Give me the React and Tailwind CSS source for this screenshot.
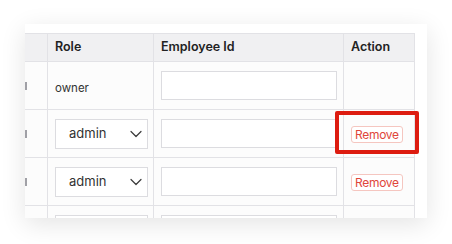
import React from 'react';

const ROWS = [
  { role: 'owner', editable: false, remove: false },
  { role: 'admin', editable: true, remove: true, highlight: true },
  { role: 'admin', editable: true, remove: true },
  { role: '', editable: true, remove: false },
];

const Chevron = () => (
  <svg width="12" height="8" viewBox="0 0 12 8" fill="none" className="absolute right-[5px] top-1/2 -translate-y-1/2">
    <path d="M1 1.5 L6 6.5 L11 1.5" stroke="#3a3a3a" strokeWidth="1.2" strokeLinecap="round" strokeLinejoin="round" />
  </svg>
);

const RoleSelect = ({ value }) => (
  <div className="relative w-[93px] h-[30px] border border-[#dcdce0] bg-white flex items-center pl-[13px] text-[13px] text-[#333]">
    {value}
    <Chevron />
  </div>
);

const EmployeeInput = () => (
  <div className="w-[176px] h-[29px] border border-[#dcdce0] bg-white" />
);

export default function App() {
  return (
    <div className="w-[452px] h-[244px] bg-white pt-[24px] pl-[25px]" style={{ fontFamily: 'Inter, "Liberation Sans", sans-serif' }}>
      <div className="w-[402px] h-[194px] bg-white shadow-[0_6px_24px_rgba(0,0,0,0.11)] overflow-hidden pt-[9px]">
        <table className="border-collapse table-fixed ml-[-31px] w-[420px]">
          <colgroup>
            <col className="w-[53px]" />
            <col className="w-[106px]" />
            <col className="w-[190px]" />
            <col className="w-[71px]" />
          </colgroup>
          <thead>
            <tr className="h-[28px] bg-[#f0f0f2]">
              <th className="border border-[#e2e2e6]" />
              <th className="border border-[#e2e2e6] text-left pl-[7px] text-[12.5px] font-semibold text-[#222]">Role</th>
              <th className="border border-[#e2e2e6] text-left pl-[7px] text-[12.5px] font-semibold text-[#222]">Employee Id</th>
              <th className="border border-[#e2e2e6] text-left pl-[7px] text-[12.5px] font-semibold text-[#222]">Action</th>
            </tr>
          </thead>
          <tbody>
            {ROWS.map((row, i) => (
              <tr key={i} className="h-[48px] bg-[#fcfcfc]">
                <td className="border border-[#e2e2e6] p-0">
                  <div className="w-[32px] flex justify-end">
                    <span className="w-[2px] h-[8px] bg-[#a0a0a6]" />
                  </div>
                </td>
                <td className="border border-[#e2e2e6] pl-[7px] align-middle">
                  {row.editable ? (
                    <RoleSelect value={row.role} />
                  ) : (
                    <span className="text-[11.5px] text-[#333]">{row.role}</span>
                  )}
                </td>
                <td className="border border-[#e2e2e6] pl-[7px] align-middle">
                  <EmployeeInput />
                </td>
                <td className="border border-[#e2e2e6] pl-[7px] align-middle relative">
                  {row.remove && (
                    <button className="h-[17px] px-[3px] border border-[#f5c6c0] rounded-[3px] bg-white text-[12px] tracking-[-0.3px] leading-none text-[#e0463a] -translate-y-[1px]">
                      Remove
                    </button>
                  )}
                  {row.highlight && (
                    <div className="absolute left-[-9px] top-[1px] w-[84px] h-[43px] border-4 border-[#dd1c10] rounded-[2px]" />
                  )}
                </td>
              </tr>
            ))}
          </tbody>
        </table>
      </div>
    </div>
  );
}
